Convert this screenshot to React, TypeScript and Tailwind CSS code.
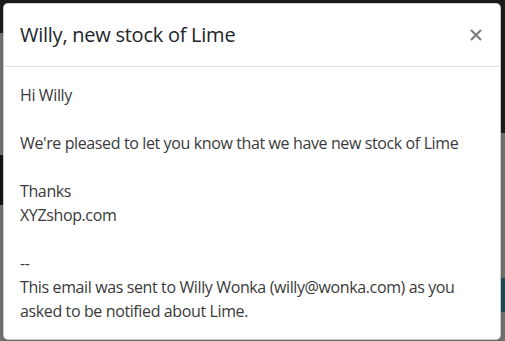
export default function App() {
  const lines = [
    'Hi Willy',
    '',
    "We're pleased to let you know that we have new stock of Lime",
    '',
    'Thanks',
    'XYZshop.com',
    '',
    '--',
    'This email was sent to Willy Wonka (willy@wonka.com) as you asked to be notified about Lime.',
  ]

  return (
    <div className="relative h-[341px] w-[505px] overflow-hidden bg-[#6f6f6f] font-['Segoe_UI','Open_Sans',sans-serif]">
      {/* page behind the backdrop */}
      <div className="absolute inset-x-0 top-0 h-[33px] bg-[#1b1b1b]" />
      <div className="absolute top-[33px] right-0 h-[100px] w-[6px] bg-[#1b1b1b]" />
      <div className="absolute top-[155px] left-0 h-[50px] w-[4px] bg-[#141414]" />
      <div className="absolute top-[278px] right-0 h-[34px] w-[5px] bg-[#1f4d55]" />

      <div className="relative p-[3px]">
        <div className="flex w-[498px] flex-col rounded-[5px] border border-black/20 bg-white shadow-sm">
          <div className="flex items-start justify-between border-b border-[#dee2e6] p-4">
            <h5 className="text-[20px] leading-[30px] font-medium tracking-[-0.25px] text-[#212529]">
              Willy, new stock of Lime
            </h5>
            <button className="mr-[2px] flex h-[30px] items-center">
              <svg width="12" height="12" viewBox="0 0 12 12" className="stroke-[#7a7a7a]" strokeWidth="2">
                <path d="M1 1L11 11M11 1L1 11" />
              </svg>
            </button>
          </div>
          <div className="p-4 text-[16px] leading-6 tracking-[-0.38px] text-[#3a3a3a]">
            {lines.map((line, i) => (
              <div key={i}>{line || '\u00a0'}</div>
            ))}
          </div>
        </div>
      </div>
    </div>
  )
}
